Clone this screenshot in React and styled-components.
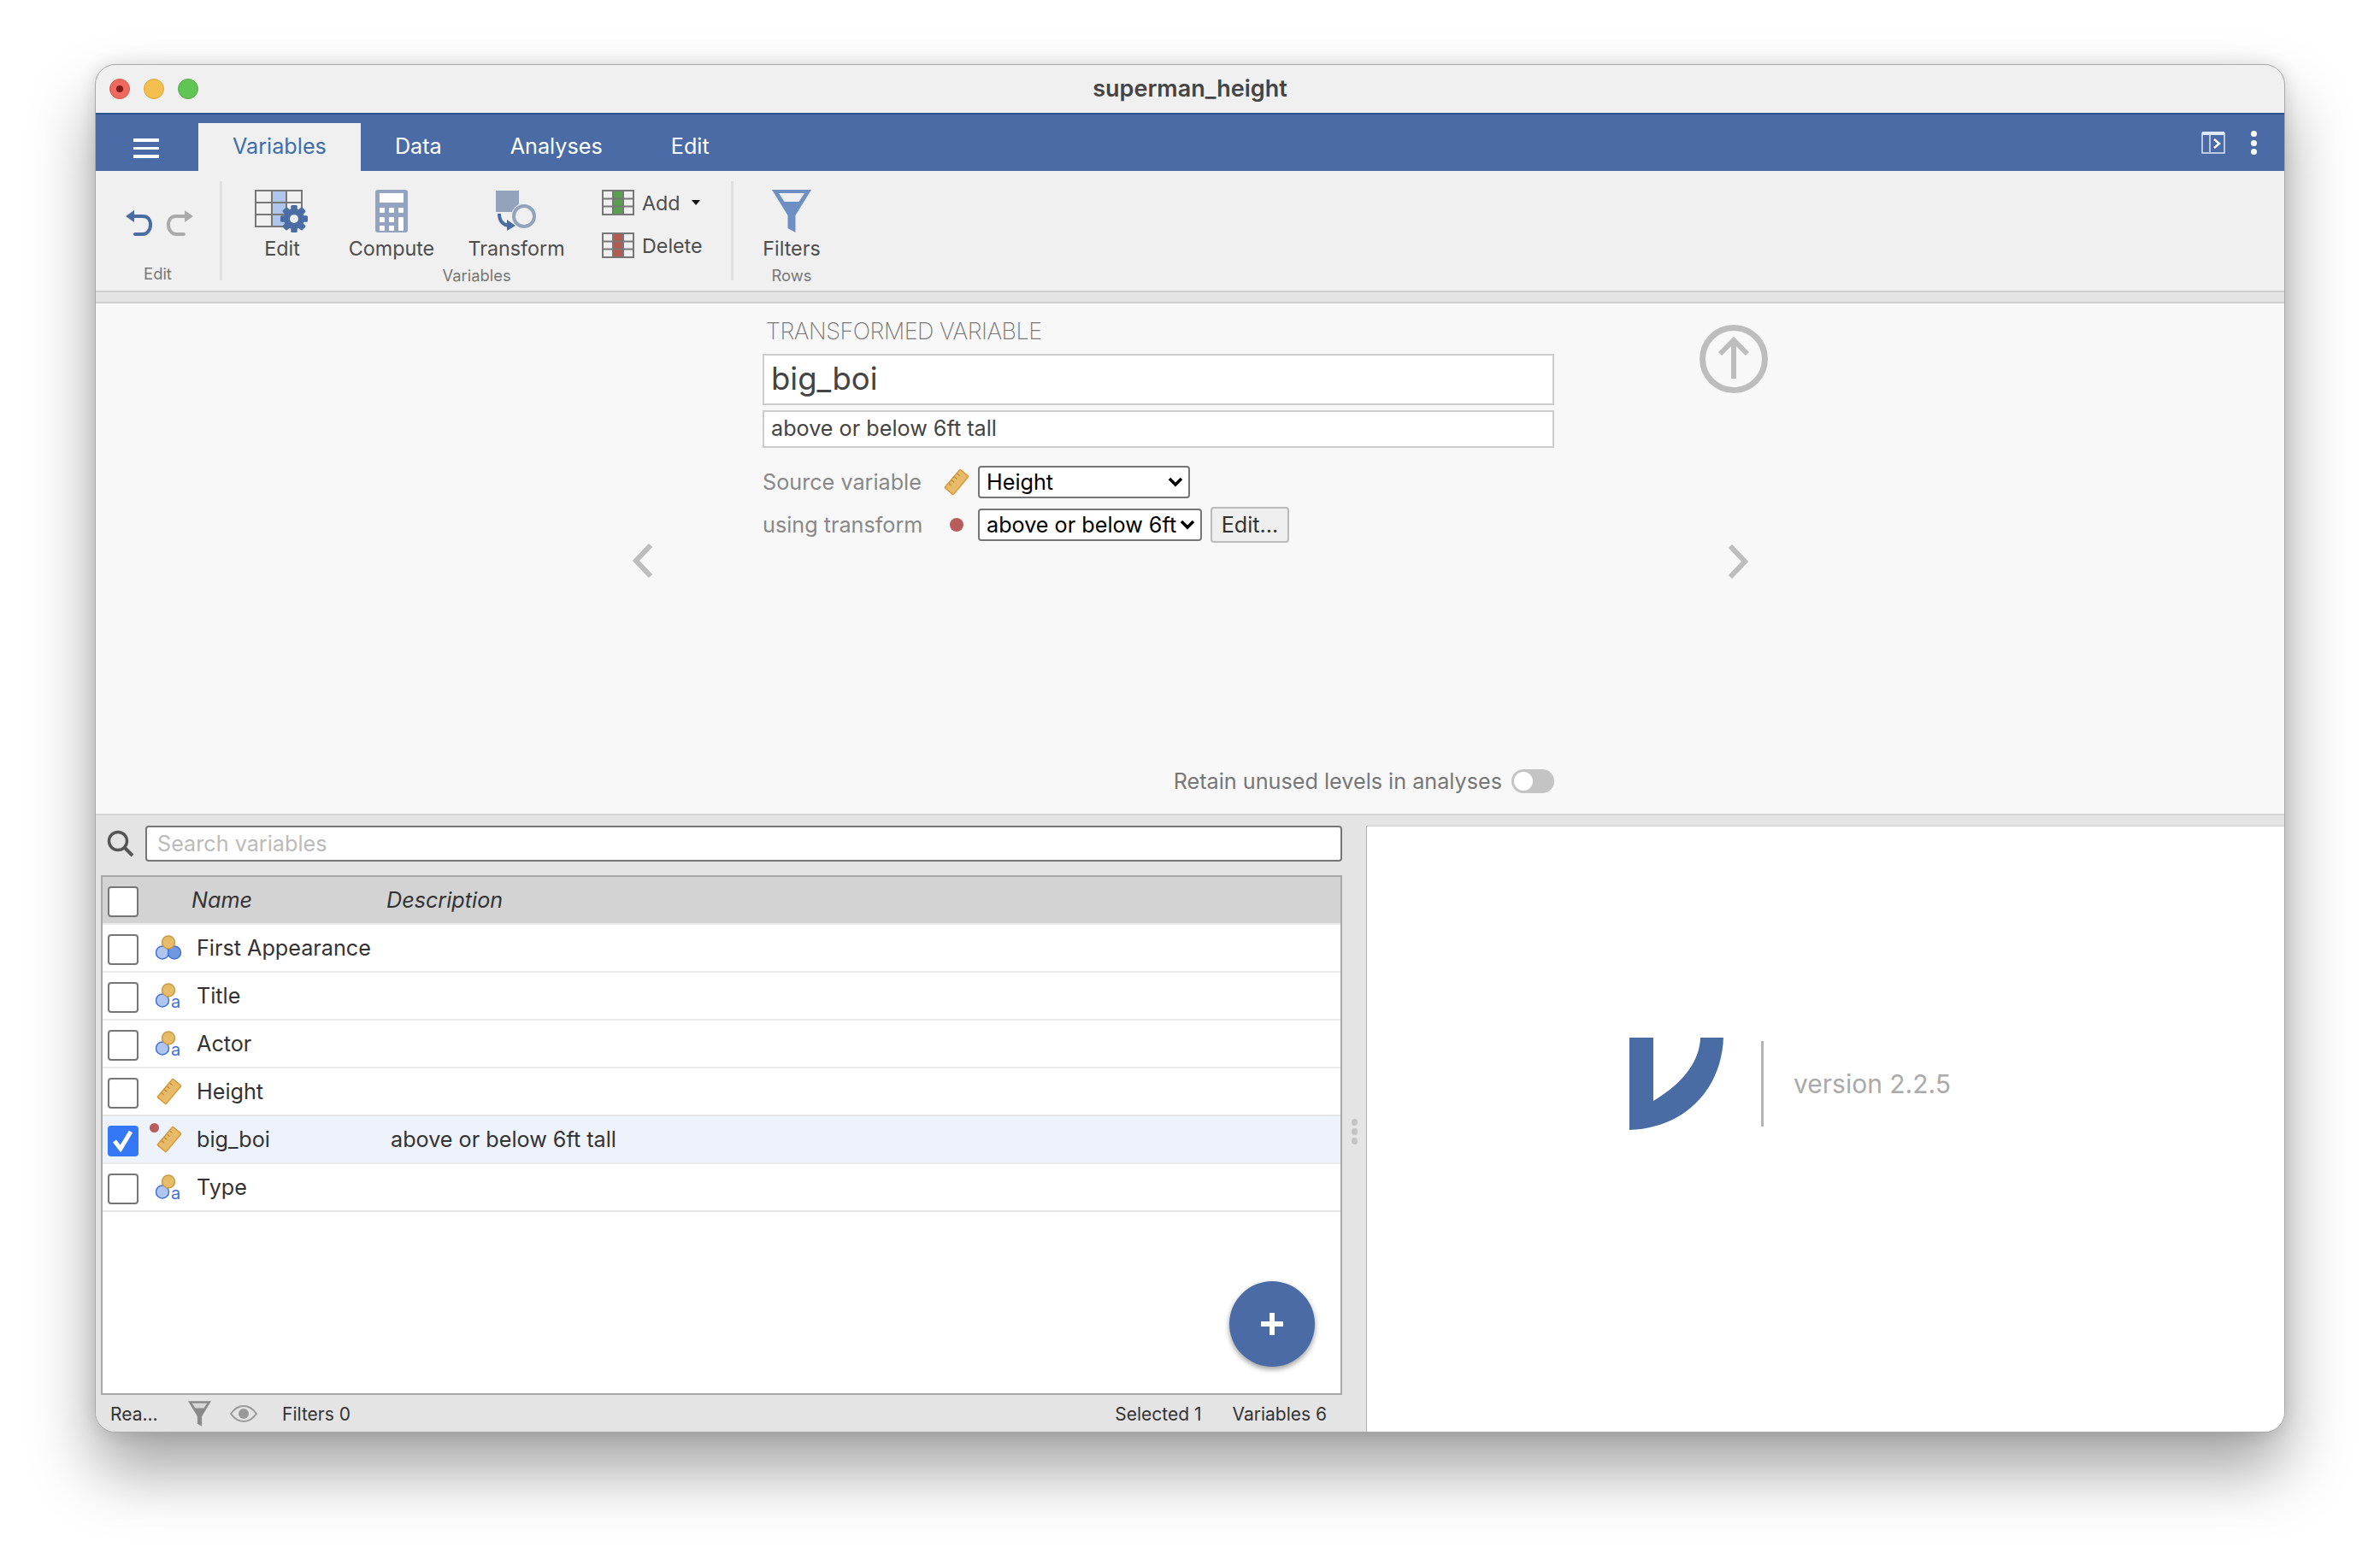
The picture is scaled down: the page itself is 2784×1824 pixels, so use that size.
import React from 'react'
import styled, { createGlobalStyle } from 'styled-components'

const GlobalStyle = createGlobalStyle`
  html, body { margin: 0; padding: 0; background: #fff; }
  body { font-family: Inter, "Liberation Sans", sans-serif; height: 1824px; overflow: hidden; }
`

const chevron = `url("data:image/svg+xml,%3Csvg xmlns='http://www.w3.org/2000/svg' width='18' height='12' viewBox='0 0 18 12'%3E%3Cpath d='M2 2l7 7 7-7' fill='none' stroke='%23000' stroke-width='3.500'/%3E%3C/svg%3E")`

const variables = [
  { name: 'First Appearance', icon: 'nominal' },
  { name: 'Title', icon: 'text' },
  { name: 'Actor', icon: 'text' },
  { name: 'Height', icon: 'ruler' },
  { name: 'big_boi', icon: 'ruler', description: 'above or below 6ft tall', selected: true },
  { name: 'Type', icon: 'text' },
]

function UndoIcon({ color, flip }) {
  return (
    <svg width="32" height="34" viewBox="0 0 32 34" style={{ transform: flip ? 'scaleX(-1)' : 'none' }}>
      <path d="M9 9h12c6 0 9 4 9 10s-4 11-9 11h-9" fill="none" stroke={color} strokeWidth="4" strokeLinecap="round" />
      <path d="M1 9l10-7v14z" fill={color} />
    </svg>
  )
}

function GridEditIcon() {
  const teeth = [0, 45, 90, 135, 180, 225, 270, 315]
  return (
    <svg width="64" height="52" viewBox="0 0 64 52">
      <rect x="20" y="1" width="17" height="42" fill="#aec6ee" />
      <path d="M1 1h54v42H1zM1 15h54M1 29h54M20 1v42M37 1v42" fill="none" stroke="#777" strokeWidth="2" />
      <g fill="#4a6ca5">
        <circle cx="46" cy="34" r="12" />
        {teeth.map((a) => (
          <rect key={a} x="42.500" y="18" width="7" height="32" rx="1.500" transform={`rotate(${a} 46 34)`} />
        ))}
      </g>
      <circle cx="46" cy="34" r="5" fill="#f0f0f0" />
    </svg>
  )
}

function ComputeIcon() {
  const keys = [[5, 21], [16, 21], [27, 21], [5, 32], [16, 32], [5, 42], [16, 42]]
  return (
    <svg width="38" height="50" viewBox="0 0 38 50">
      <rect width="38" height="50" rx="3" fill="#94a4c0" />
      <rect x="5" y="4" width="28" height="11" fill="#fff" />
      {keys.map(([x, y]) => (
        <rect key={`${x}-${y}`} x={x} y={y} width="6" height="6" rx="1" fill="#fff" />
      ))}
      <rect x="27" y="32" width="6" height="16" rx="1" fill="#fff" />
    </svg>
  )
}

function TransformIcon() {
  return (
    <svg width="50" height="50" viewBox="0 0 50 50">
      <rect x="1" y="1" width="27" height="25" fill="#94a3bd" />
      <circle cx="34" cy="31" r="15" fill="#f0f0f0" />
      <circle cx="34" cy="31" r="12" fill="#f0f0f0" stroke="#94a3bd" strokeWidth="4" />
      <path d="M5 28c0 8 4 13 11 14" fill="none" stroke="#4a6ca5" strokeWidth="4" />
      <path d="M14 35l10 7-10 6z" fill="#4a6ca5" />
    </svg>
  )
}

function ColumnIcon({ color }) {
  return (
    <svg width="38" height="30" viewBox="0 0 38 30">
      <rect x="14" y="1" width="11" height="28" fill={color} />
      <path d="M1 1h36v28H1zM1 10.500h36M1 19.500h36M13 1v28M25 1v28" fill="none" stroke="#777" strokeWidth="2" />
    </svg>
  )
}

function FunnelIcon({ width, height, color, top }) {
  return (
    <svg width={width} height={height} viewBox="0 0 46 50">
      <path d="M0 0h46L27.500 30v20L18.500 45V30z" fill={color} />
      <path d="M8 4h30l-6.500 10H14.500z" fill={top} />
    </svg>
  )
}

function RulerIcon() {
  return (
    <svg width="32" height="32" viewBox="0 0 32 32">
      <g transform="rotate(40 16 16)">
        <rect x="9.500" y="2" width="13" height="28" rx="1" fill="#e8bb68" stroke="#d49a3a" strokeWidth="1.500" />
        <path d="M10 8h4M10 13h4M10 18h4M10 23h4" stroke="#b98a35" strokeWidth="1.200" />
      </g>
    </svg>
  )
}

function NominalIcon({ text }) {
  return (
    <svg width="34" height="36" viewBox="0 0 34 36">
      <circle cx="8" cy="23.500" r="7.500" fill="#aec6ee" stroke="#3f72d8" strokeWidth="1.500" />
      {!text && <circle cx="22" cy="23.500" r="7.500" fill="#7197e0" stroke="#3f72d8" strokeWidth="1.500" />}
      <circle cx="15" cy="11.500" r="7.500" fill="#e8bb68" stroke="#c99a45" strokeWidth="1.500" />
      {text && (
        <text x="18" y="32" fontFamily="Inter, sans-serif" fontSize="20" fill="#3f72d8">a</text>
      )}
    </svg>
  )
}

function VariableIcon({ kind }) {
  if (kind === 'ruler') return <RulerIcon />
  return <NominalIcon text={kind === 'text'} />
}

function Checkbox({ checked }) {
  return (
    <CheckBox $checked={checked}>
      {checked && (
        <svg width="26" height="26" viewBox="0 0 26 26">
          <path d="M3 13l7 9L22 2" fill="none" stroke="#fff" strokeWidth="5" />
        </svg>
      )}
    </CheckBox>
  )
}

export default function App() {
  return (
    <>
      <GlobalStyle />
      <Window>
        <TitleBar>
          <Lights>
            <Light $color="#ee6a5f" $edge="#d8564b"><RedDot /></Light>
            <Light $color="#f5bf4f" $edge="#d9a53c" />
            <Light $color="#61c554" $edge="#4fae44" />
          </Lights>
          <WindowTitle>superman_height</WindowTitle>
        </TitleBar>

        <TopBar>
          <Burger>
            <i /><i /><i />
          </Burger>
          <Tab $active>Variables</Tab>
          <Tab>Data</Tab>
          <Tab>Analyses</Tab>
          <Tab>Edit</Tab>
          <TopBarRight>
            <svg width="28" height="26" viewBox="0 0 28 26">
              <path d="M1 2h26v23H1z" fill="none" stroke="#dfe7f5" strokeWidth="1.500" />
              <path d="M1 2h26" stroke="#dfe7f5" strokeWidth="4" />
              <path d="M10 4v20" stroke="#dfe7f5" strokeWidth="1.500" />
              <path d="M15 9l6 5-6 5" fill="none" stroke="#fff" strokeWidth="2.500" />
            </svg>
            <KebabIcon>
              <i /><i /><i />
            </KebabIcon>
          </TopBarRight>
        </TopBar>

        <Ribbon>
          <RibbonGroup $width={148}>
            <UndoRow>
              <UndoIcon color="#4a6ca5" />
              <UndoIcon color="#aaaaaa" flip />
            </UndoRow>
            <GroupLabel>Edit</GroupLabel>
          </RibbonGroup>
          <RibbonGroup $width={598}>
            <RibbonButtons>
              <BigButton $width={104}><IconSlot><GridEditIcon /></IconSlot>Edit</BigButton>
              <BigButton $width={152}><IconSlot><ComputeIcon /></IconSlot>Compute</BigButton>
              <BigButton $width={140}><IconSlot><TransformIcon /></IconSlot>Transform</BigButton>
              <SmallButtons>
                <SmallButton><ColumnIcon color="#5a9e50" />Add<Caret /></SmallButton>
                <SmallButton><ColumnIcon color="#b55a50" />Delete</SmallButton>
              </SmallButtons>
            </RibbonButtons>
            <GroupLabel>Variables</GroupLabel>
          </RibbonGroup>
          <RibbonGroup $width={136} $last>
            <RibbonButtons>
              <BigButton $width={100}>
                <IconSlot><FunnelIcon width={46} height={50} color="#6d8fc4" top="#f0f0f0" /></IconSlot>
                Filters
              </BigButton>
            </RibbonButtons>
            <GroupLabel>Rows</GroupLabel>
          </RibbonGroup>
        </Ribbon>
        <Strip />

        <Editor>
          <SideLeft>
            <NavArrow>
              <svg width="24" height="40" viewBox="0 0 24 40">
                <path d="M21 2L4 20l17 18" fill="none" stroke="#bdbdbd" strokeWidth="6" />
              </svg>
            </NavArrow>
          </SideLeft>
          <EditorCenter>
            <EditorHeading>TRANSFORMED VARIABLE</EditorHeading>
            <NameInput readOnly value="big_boi" />
            <DescInput readOnly value="above or below 6ft tall" />
            <SourceRow $top={20}>
              <SourceLabel>Source variable</SourceLabel>
              <SourceMark><RulerIcon /></SourceMark>
              <NativeSelect $width={248} defaultValue="Height">
                <option>Height</option>
              </NativeSelect>
            </SourceRow>
            <SourceRow $top={10}>
              <SourceLabel>using transform</SourceLabel>
              <SourceMark><TransformDot /></SourceMark>
              <NativeSelect $width={262} defaultValue="above or below 6ft">
                <option>above or below 6ft</option>
              </NativeSelect>
              <EditButton>Edit...</EditButton>
            </SourceRow>
            <RetainRow>
              Retain unused levels in analyses
              <Toggle><Knob /></Toggle>
            </RetainRow>
          </EditorCenter>
          <SideRight>
            <UpButton>
              <svg width="80" height="80" viewBox="0 0 80 80">
                <circle cx="40" cy="40" r="36.500" fill="none" stroke="#bdbdbd" strokeWidth="7" />
                <path d="M40 63V19M24 34l16-16 16 16" fill="none" stroke="#bdbdbd" strokeWidth="6" />
              </svg>
            </UpButton>
            <NavArrow $right>
              <svg width="24" height="40" viewBox="0 0 24 40">
                <path d="M3 2l17 18L3 38" fill="none" stroke="#bdbdbd" strokeWidth="6" />
              </svg>
            </NavArrow>
          </SideRight>
        </Editor>

        <Lower>
          <LeftPane>
            <SearchRow>
              <svg width="32" height="32" viewBox="0 0 32 32">
                <circle cx="13" cy="13" r="10.500" fill="none" stroke="#555" strokeWidth="3.500" />
                <path d="M21 21l9 9" stroke="#555" strokeWidth="4" />
              </svg>
              <SearchInput readOnly placeholder="Search variables" />
            </SearchRow>
            <Table>
              <HeaderRow>
                <CheckCell><Checkbox /></CheckCell>
                <HeaderName>Name</HeaderName>
                <HeaderDesc>Description</HeaderDesc>
              </HeaderRow>
              {variables.map((v) => (
                <Row key={v.name} $selected={v.selected}>
                  <CheckCell><Checkbox checked={v.selected} /></CheckCell>
                  <IconCell>
                    {v.selected && <RowDot />}
                    <VariableIcon kind={v.icon} />
                  </IconCell>
                  <NameCell>{v.name}</NameCell>
                  <DescCell>{v.description}</DescCell>
                </Row>
              ))}
              <AddButton>
                <svg width="28" height="28" viewBox="0 0 28 28">
                  <path d="M14 1v26M1 14h26" stroke="#fff" strokeWidth="6" />
                </svg>
              </AddButton>
            </Table>
            <StatusBar>
              <StatusText $width={91}>Rea...</StatusText>
              <FunnelIcon width={27} height={30} color="#8a8a8a" top="#d8d8d8" />
              <EyeIcon viewBox="0 0 32 20" width="32" height="20">
                <path d="M1 10C6 3 11 1 16 1s10 2 15 9c-5 7-10 9-15 9S6 17 1 10z" fill="none" stroke="#999" strokeWidth="2" />
                <circle cx="16" cy="10" r="6" fill="#999" />
              </EyeIcon>
              <StatusText>Filters 0</StatusText>
              <StatusRight>
                <StatusText>Selected 1</StatusText>
                <StatusText>Variables 6</StatusText>
              </StatusRight>
            </StatusBar>
          </LeftPane>
          <Splitter>
            <i /><i /><i />
          </Splitter>
          <ResultsPane>
            <svg width="110" height="108" viewBox="0 0 110 108">
              <path d="M0 0h28v74C60 55 82 30 83 0h27C108 60 65 106 0 108z" fill="#4a6ca5" />
            </svg>
            <LogoDivider />
            <Version>version 2.2.5</Version>
          </ResultsPane>
        </Lower>
      </Window>
    </>
  )
}

const Window = styled.div`
  width: 2562px;
  height: 1601px;
  margin: 75px 0 0 111px;
  box-sizing: border-box;
  border: 1px solid #a8a8a8;
  border-radius: 24px;
  overflow: hidden;
  display: flex;
  flex-direction: column;
  background: #f0f0f0;
  box-shadow: 0 44px 76px rgba(0, 0, 0, 0.36), 0 0 20px rgba(0, 0, 0, 0.12);
`
const TitleBar = styled.div`
  height: 56px;
  flex: none;
  display: flex;
  align-items: center;
  position: relative;
`
const Lights = styled.div`
  display: flex;
  gap: 16px;
  padding-left: 16px;
`
const Light = styled.div`
  width: 24px;
  height: 24px;
  border-radius: 50%;
  box-sizing: border-box;
  background: ${(p) => p.$color};
  border: 1px solid ${(p) => p.$edge};
  display: flex;
  align-items: center;
  justify-content: center;
`
const RedDot = styled.span`
  width: 8px;
  height: 8px;
  border-radius: 50%;
  background: #7a1c14;
`
const WindowTitle = styled.div`
  position: absolute;
  left: 0;
  right: 0;
  top: 11px;
  text-align: center;
  font-size: 27px;
  font-weight: 600;
  color: #444;
`
const TopBar = styled.div`
  height: 68px;
  flex: none;
  box-sizing: border-box;
  border-top: 2px solid #2f5391;
  background: #4a6ba5;
  display: flex;
  align-items: flex-end;
  color: #fff;
`
const Burger = styled.div`
  width: 120px;
  height: 56px;
  box-sizing: border-box;
  padding: 18px 0 0 44px;
  display: flex;
  flex-direction: column;
  gap: 6px;
  i {
    display: block;
    width: 30px;
    height: 3.500px;
    background: #fff;
  }
`
const Tab = styled.div`
  height: 56px;
  padding: 0 40px 3px;
  box-sizing: border-box;
  display: flex;
  align-items: center;
  font-size: 25.200px;
  color: ${(p) => (p.$active ? '#3e6da9' : '#fff')};
  background: ${(p) => (p.$active ? '#f0f0f0' : 'transparent')};
`
const TopBarRight = styled.div`
  margin-left: auto;
  height: 66px;
  display: flex;
  align-items: center;
  gap: 30px;
  padding: 0 32px 0 0;
`
const KebabIcon = styled.div`
  display: flex;
  flex-direction: column;
  gap: 3.500px;
  i {
    display: block;
    width: 7px;
    height: 7px;
    border-radius: 50%;
    background: #fff;
  }
`
const Ribbon = styled.div`
  height: 140px;
  flex: none;
  display: flex;
  background: #f0f0f0;
`
const RibbonGroup = styled.div`
  position: relative;
  width: ${(p) => p.$width}px;
  margin: 12px 0;
  box-sizing: border-box;
  border-right: ${(p) => (p.$last ? 'none' : '3px solid #e0e0e0')};
  display: flex;
  flex-direction: column;
`
const UndoRow = styled.div`
  height: 97px;
  flex: none;
  display: flex;
  gap: 17px;
  justify-content: center;
  padding: 32px 0 0 3px;
  box-sizing: border-box;
`
const RibbonButtons = styled.div`
  height: 99px;
  flex: none;
  display: flex;
  padding-left: 18px;
`
const BigButton = styled.div`
  width: ${(p) => p.$width}px;
  display: flex;
  flex-direction: column;
  align-items: center;
  font-size: 23.300px;
  color: #4d4d4d;
`
const IconSlot = styled.div`
  height: 64px;
  padding-top: 10px;
  box-sizing: border-box;
  display: flex;
  align-items: flex-start;
`
const SmallButtons = styled.div`
  display: flex;
  flex-direction: column;
  gap: 20px;
  padding: 10px 0 0 30px;
`
const SmallButton = styled.div`
  display: flex;
  align-items: center;
  gap: 9px;
  height: 30px;
  font-size: 23.300px;
  color: #4d4d4d;
`
const Caret = styled.span`
  margin-left: 4px;
  border-left: 5.500px solid transparent;
  border-right: 5.500px solid transparent;
  border-top: 6px solid #111;
`
const GroupLabel = styled.div`
  text-align: center;
  font-size: 18.400px;
  line-height: 22px;
  color: #777;
`
const Strip = styled.div`
  height: 15px;
  flex: none;
  box-sizing: border-box;
  background: #e4e4e4;
  border-top: 2px solid #cfcfcf;
  border-bottom: 2px solid #cfcfcf;
`
const Editor = styled.div`
  height: 599px;
  flex: none;
  box-sizing: border-box;
  background: #f8f8f8;
  border-bottom: 2px solid #d4d4d4;
  display: flex;
`
const SideLeft = styled.div`
  width: 780px;
  flex: none;
  display: flex;
  justify-content: flex-end;
  padding: 281px 128px 0 0;
  box-sizing: border-box;
`
const NavArrow = styled.div`
  height: 40px;
  margin-top: ${(p) => (p.$right ? '177px' : '0')};
  margin-left: ${(p) => (p.$right ? '33px' : '0')};
`
const EditorCenter = styled.div`
  width: 926px;
  flex: none;
  display: flex;
  flex-direction: column;
`
const EditorHeading = styled.div`
  font-size: 27px;
  font-weight: 200;
  color: #777;
  letter-spacing: -0.5px;
  line-height: 36px;
  margin: 15px 0 8px 4px;
`
const NameInput = styled.input`
  height: 60px;
  box-sizing: border-box;
  width: 100%;
  border: 2px solid #ccc;
  outline: none;
  background: #fff;
  padding: 0 8px 2px;
  font-family: inherit;
  font-size: 36.500px;
  color: #444;
`
const DescInput = styled(NameInput)`
  height: 44px;
  margin-top: 6px;
  font-size: 25.200px;
`
const SourceRow = styled.div`
  display: flex;
  align-items: center;
  height: 40px;
  margin-top: ${(p) => p.$top}px;
`
const SourceLabel = styled.div`
  width: 202px;
  flex: none;
  font-size: 25.200px;
  color: #888;
`
const SourceMark = styled.div`
  width: 50px;
  flex: none;
  display: flex;
  justify-content: center;
`
const TransformDot = styled.span`
  width: 16px;
  height: 16px;
  border-radius: 50%;
  background: #b85c5c;
`
const NativeSelect = styled.select`
  width: ${(p) => p.$width}px;
  height: 38px;
  box-sizing: border-box;
  appearance: none;
  border: 2px solid #767676;
  border-radius: 4px;
  background: #fff ${chevron} no-repeat right 6px center;
  color: #000;
  font-family: inherit;
  font-size: 25.200px;
  padding: 0 4px 0 8px;
`
const EditButton = styled.div`
  margin-left: 10px;
  width: 92px;
  height: 42px;
  box-sizing: border-box;
  border: 2px solid #bbb;
  border-radius: 4px;
  background: #efefef;
  color: #333;
  font-size: 25.200px;
  display: flex;
  align-items: center;
  justify-content: center;
`
const RetainRow = styled.div`
  margin-top: auto;
  margin-bottom: 23px;
  display: flex;
  align-items: center;
  justify-content: flex-end;
  gap: 11px;
  font-size: 25.200px;
  color: #777;
`
const Toggle = styled.div`
  width: 50px;
  height: 28px;
  box-sizing: border-box;
  border-radius: 14px;
  background: #c4c4c4;
  padding: 3px;
`
const Knob = styled.div`
  width: 22px;
  height: 22px;
  border-radius: 50%;
  background: #fff;
`
const SideRight = styled.div`
  flex: 1;
  padding: 25px 0 0 170px;
  box-sizing: border-box;
`
const UpButton = styled.div`
  height: 80px;
`
const Lower = styled.div`
  flex: 1;
  min-height: 0;
  display: flex;
  background: #e4e4e4;
`
const LeftPane = styled.div`
  width: 1458px;
  flex: none;
  display: flex;
  flex-direction: column;
`
const SearchRow = styled.div`
  height: 70px;
  flex: none;
  display: flex;
  align-items: center;
  gap: 13px;
  padding: 0 0 4px 13px;
  box-sizing: border-box;
`
const SearchInput = styled.input`
  flex: 1;
  height: 42px;
  box-sizing: border-box;
  border: 2px solid #767676;
  border-radius: 4px;
  background: #fff;
  outline: none;
  padding: 0 12px;
  font-family: inherit;
  font-size: 25.200px;
  &::placeholder {
    color: #bbb;
  }
`
const Table = styled.div`
  position: relative;
  flex: 1;
  min-height: 0;
  margin-left: 6px;
  border: 2px solid #a8a8a8;
  background: #fff;
`
const HeaderRow = styled.div`
  height: 54px;
  display: flex;
  align-items: center;
  background: #d3d3d3;
`
const CheckCell = styled.div`
  width: 62px;
  padding-left: 6px;
  box-sizing: border-box;
  flex: none;
  display: flex;
  align-items: center;
  padding-top: 3px;
`
const CheckBox = styled.span`
  width: 36px;
  height: 36px;
  box-sizing: border-box;
  border-radius: 4px;
  border: ${(p) => (p.$checked ? 'none' : '2px solid #767676')};
  background: ${(p) => (p.$checked ? '#3478f6' : '#fff')};
  display: flex;
  align-items: center;
  justify-content: center;
`
const HeaderName = styled.div`
  width: 270px;
  padding-left: 42px;
  box-sizing: border-box;
  font-size: 25.200px;
  font-style: italic;
  color: #333;
`
const HeaderDesc = styled.div`
  font-size: 25.200px;
  font-style: italic;
  color: #333;
`
const Row = styled.div`
  height: 56px;
  box-sizing: border-box;
  display: flex;
  align-items: center;
  border-top: 2px solid ${(p) => (p.$selected ? '#e6e6e6' : '#ebebeb')};
  background: ${(p) => (p.$selected ? '#eef2fa' : '#fff')};
  &:nth-of-type(7) {
    border-bottom: 2px solid #e6e6e6;
    height: 58px;
  }
`
const IconCell = styled.div`
  position: relative;
  width: 48px;
  flex: none;
  display: flex;
  justify-content: flex-start;
`
const RowDot = styled.span`
  position: absolute;
  top: -3px;
  left: -7px;
  width: 11px;
  height: 11px;
  border-radius: 50%;
  background: #b85c5c;
`
const NameCell = styled.div`
  width: 227px;
  flex: none;
  font-size: 25.200px;
  color: #333;
`
const DescCell = styled.div`
  font-size: 25.200px;
  color: #333;
`
const AddButton = styled.div`
  position: absolute;
  right: 30px;
  bottom: 31px;
  width: 100px;
  height: 100px;
  border-radius: 50%;
  background: #4a6ba5;
  box-shadow: 0 3px 6px rgba(0, 0, 0, 0.4);
  display: flex;
  align-items: center;
  justify-content: center;
`
const StatusBar = styled.div`
  height: 43px;
  flex: none;
  box-sizing: border-box;
  display: flex;
  align-items: center;
  padding: 1px 18px 0 17px;
`
const StatusText = styled.div`
  font-size: 21px;
  color: #333;
  width: ${(p) => (p.$width ? `${p.$width}px` : 'auto')};
`
const EyeIcon = styled.svg`
  margin: 0 29px 0 22px;
`
const StatusRight = styled.div`
  margin-left: auto;
  display: flex;
  gap: 36px;
`
const Splitter = styled.div`
  width: 28px;
  flex: none;
  margin-top: 355px;
  display: flex;
  flex-direction: column;
  align-items: center;
  gap: 3px;
  i {
    display: block;
    width: 7px;
    height: 8px;
    border-radius: 50%;
    background: #c4c4c4;
  }
`
const ResultsPane = styled.div`
  flex: 1;
  margin-top: 12px;
  background: #fff;
  border-left: 1px solid #b0b0b0;
  border-top: 1px solid #cfcfcf;
  display: flex;
  align-items: flex-start;
  padding: 247px 0 0 307px;
  box-sizing: border-box;
`
const LogoDivider = styled.div`
  width: 3px;
  height: 100px;
  margin: 4px 35px 0 44px;
  background: #b4b4b4;
`
const Version = styled.div`
  font-size: 30px;
  line-height: 100px;
  margin-top: 4px;
  color: #aaa;
`
